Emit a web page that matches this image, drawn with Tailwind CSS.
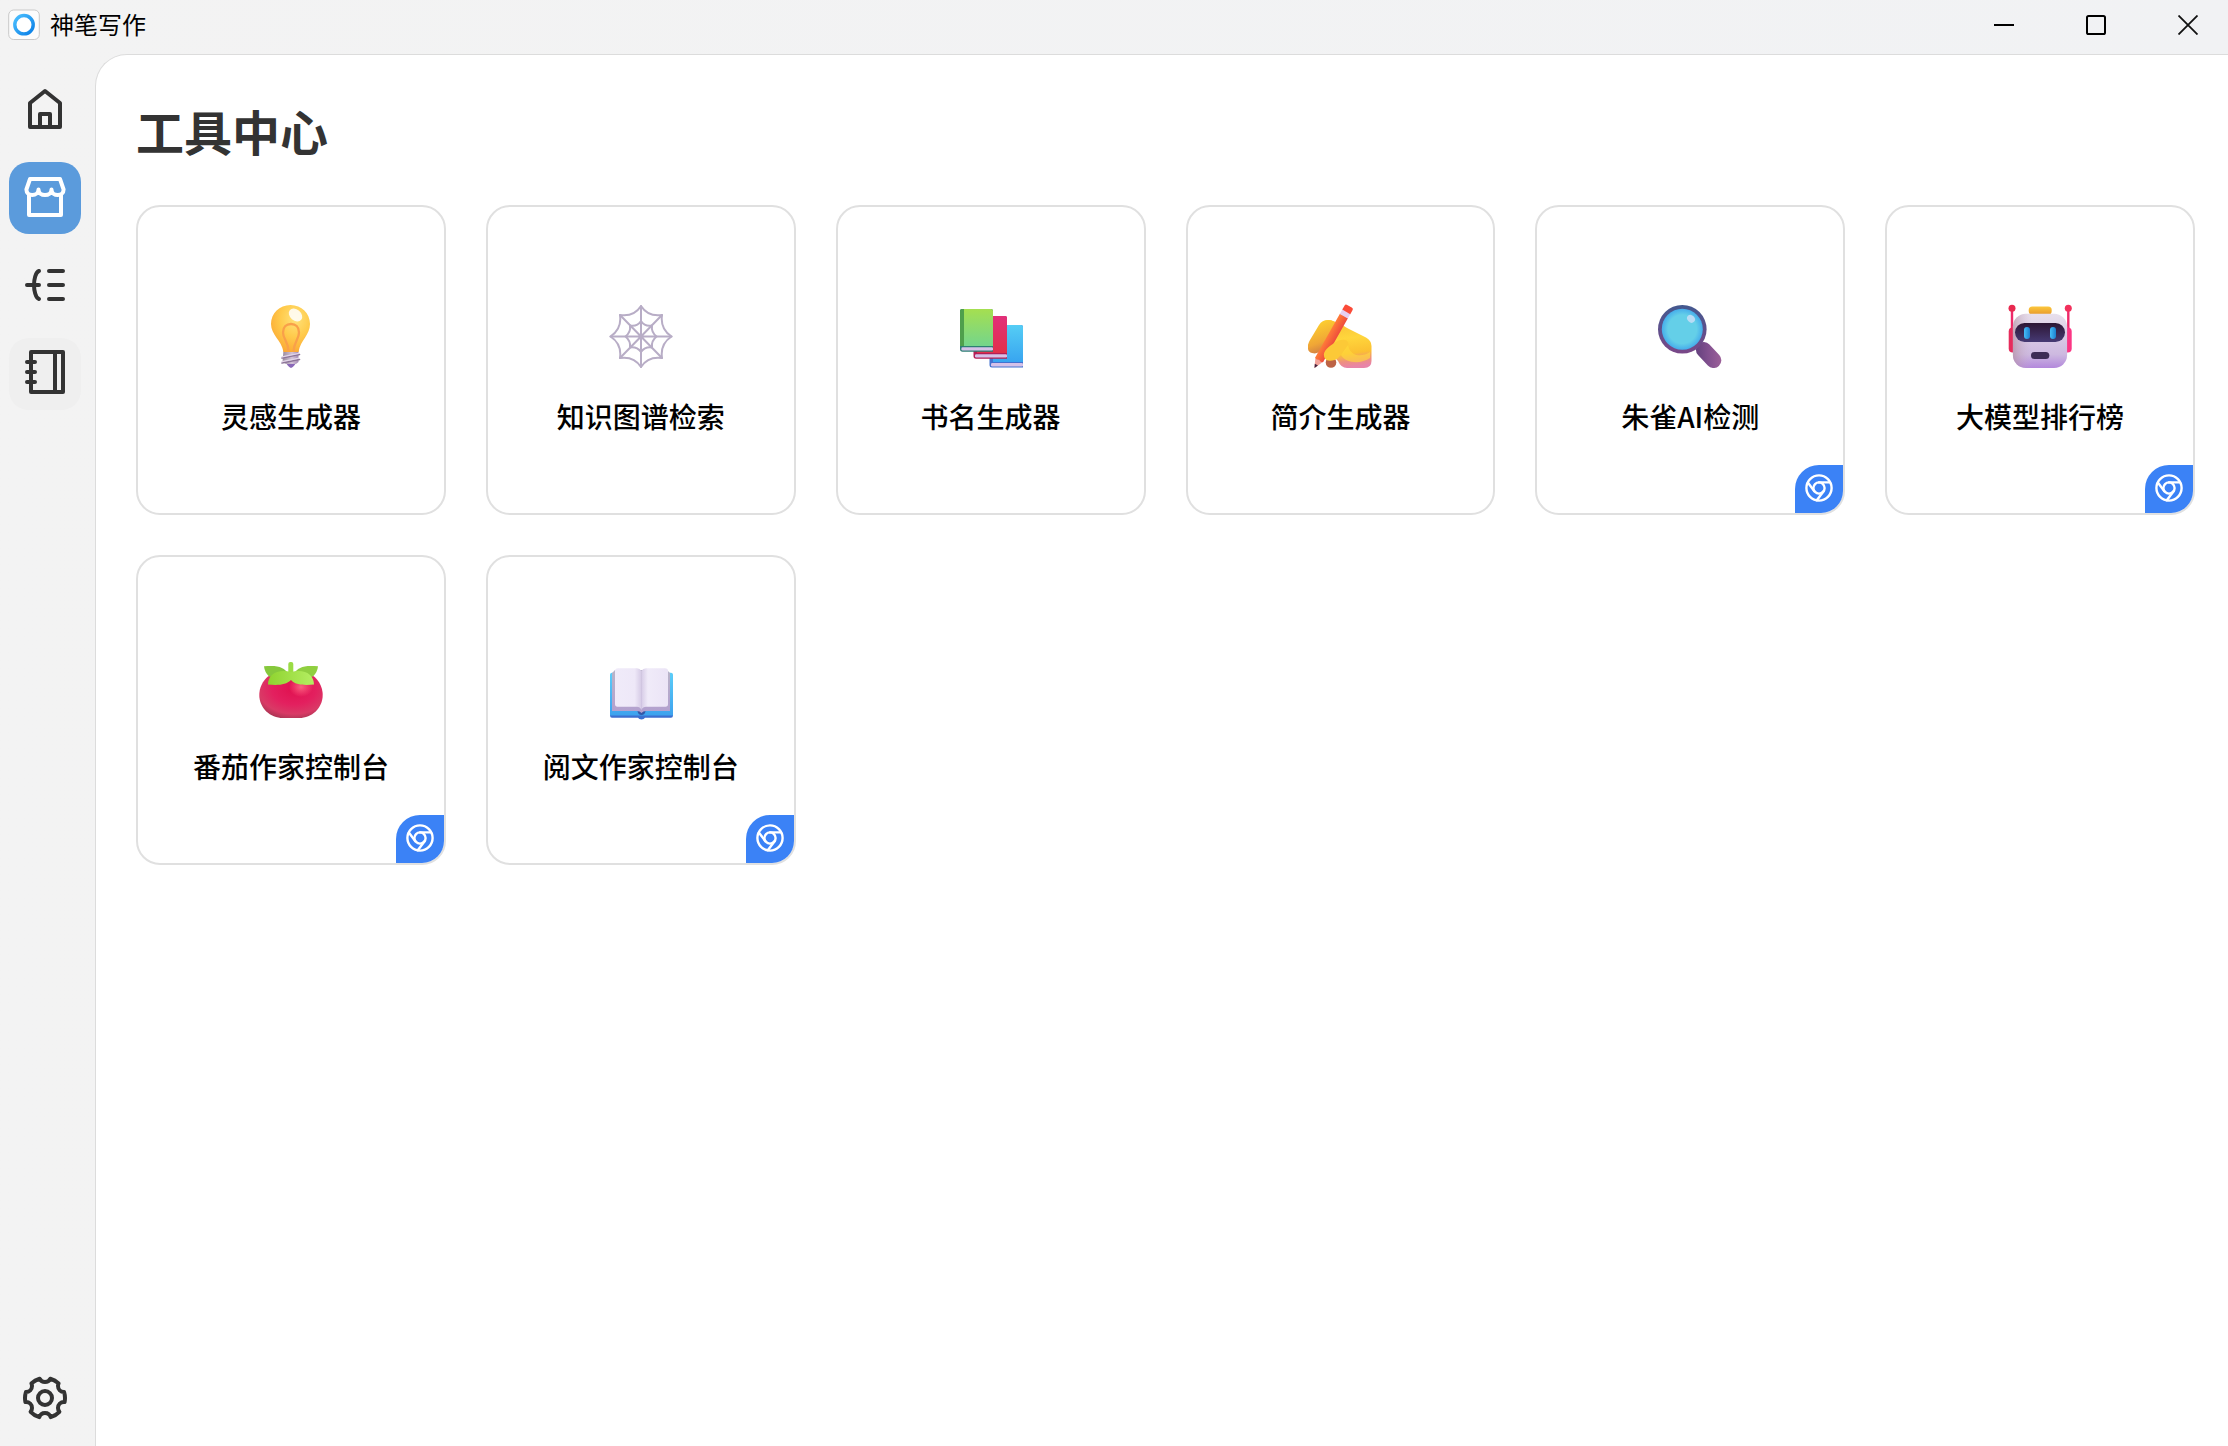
<!DOCTYPE html>
<html lang="zh-CN">
<head>
<meta charset="utf-8">
<meta name="viewport" content="width=device-width, initial-scale=1">
<title>神笔写作</title>
<script src="https://cdn.jsdelivr.net/npm/@tailwindcss/browser@4"></script>
</head>
<body class="flex min-h-screen flex-col bg-linear-to-r from-[#f3f3f3] to-[#f1f2f4] font-['Noto_Sans_CJK_SC',sans-serif] text-black">

<svg class="hidden" aria-hidden="true">
  <symbol id="chrome" viewBox="0 0 28 28">
    <g fill="none" stroke="#fff" stroke-width="2.4" stroke-linecap="round" stroke-linejoin="round">
      <circle cx="14" cy="14" r="12.6"/>
      <circle cx="14" cy="14" r="5.6"/>
      <path d="M14 8.4H25M9.2 16.9L3 8.8M18.6 17.2L11.8 26.2"/>
    </g>
  </symbol>
</svg>

<header class="flex h-[54px] shrink-0 items-center justify-between pb-1 pl-2">
  <div class="flex items-center gap-2.5">
    <svg class="h-8 w-8" viewBox="0 0 32 32" aria-hidden="true">
      <defs><linearGradient id="ring" x1="0" y1="0" x2="1" y2="1"><stop offset="0" stop-color="#4cc0ff"/><stop offset="1" stop-color="#0a7fe6"/></linearGradient></defs>
      <rect x="0.7" y="1" width="30.6" height="29.5" rx="5" fill="#fcfcfc" stroke="#c9c9c9"/>
      <circle cx="16" cy="15.7" r="9.2" fill="#fff" stroke="url(#ring)" stroke-width="3.4"/>
    </svg>
    <span class="pb-0.5 text-2xl leading-8">神笔写作</span>
  </div>
  <div class="flex gap-3">
    <button type="button" aria-label="最小化" class="flex h-12 w-20 items-center justify-center"><svg class="h-5 w-5" viewBox="0 0 20 20"><path d="M0 10H20" stroke="#000" stroke-width="2"/></svg></button>
    <button type="button" aria-label="最大化" class="flex h-12 w-20 items-center justify-center"><svg class="h-5 w-5" viewBox="0 0 20 20"><rect x="1" y="1" width="18" height="18" rx="1.6" fill="none" stroke="#000" stroke-width="2"/></svg></button>
    <button type="button" aria-label="关闭" class="flex h-12 w-20 items-center justify-center"><svg class="h-5 w-5" viewBox="0 0 20 20"><path d="M0.5 0.5L19.5 19.5M19.5 0.5L0.5 19.5" stroke="#111" stroke-width="1.8"/></svg></button>
  </div>
</header>

<div class="flex flex-1">
  <nav class="flex w-[95px] shrink-0 flex-col justify-between pt-5 pb-3 pl-[9px]">
    <div class="flex flex-col gap-4">
      <a href="#" aria-label="首页" class="flex h-18 w-18 items-center justify-center rounded-[20px] pb-0.5">
        <svg class="h-12 w-12" viewBox="0 0 48 48" fill="none" stroke="#333" stroke-width="4" stroke-linejoin="round"><path d="M9 18V42H39V18L24 6L9 18Z"/><path d="M19 29V42H29V29H19Z"/></svg>
      </a>
      <a href="#" aria-label="工具中心" aria-current="page" class="flex h-18 w-18 items-center justify-center rounded-[20px] bg-[#5b9bdc] pb-0.5">
        <svg class="h-12 w-12" viewBox="0 0 48 48" fill="none" stroke="#fff" stroke-width="4" stroke-linejoin="round" stroke-linecap="round"><path d="M8 22V42H40V22"/><path d="M5.4 16.5L9 6H39L42.6 16.5C42.6 20 40 22 36.8 22S30.5 20 30.5 16.5C30.5 20 27.5 22 24 22S17.5 20 17.5 16.5C17.5 20 14.5 22 11.2 22S5.4 20 5.4 16.5Z"/></svg>
      </a>
      <a href="#" aria-label="大纲" class="flex h-18 w-18 items-center justify-center rounded-[20px] pb-0.5">
        <svg class="h-12 w-12" viewBox="0 0 48 48" fill="none" stroke="#333" stroke-width="4" stroke-linejoin="round" stroke-linecap="round"><path d="M28 10H42M28 24H42M28 38H42M6 24H18M18 10C14.5 11 13 19 13 24S14.5 37 18 38"/></svg>
      </a>
      <a href="#" aria-label="笔记本" class="flex h-18 w-18 items-center justify-center rounded-[20px] bg-[#efefef] pb-0.5">
        <svg class="h-12 w-12" viewBox="0 0 48 48" fill="none" stroke="#333" stroke-width="4" stroke-linejoin="round" stroke-linecap="round"><path d="M10 3H42V43H10ZM34 3V43M6 13H14M6 23H14M6 33H14"/></svg>
      </a>
    </div>
    <a href="#" aria-label="设置" class="flex h-18 w-18 items-center justify-center rounded-[20px]">
      <svg class="h-12 w-12" viewBox="0 0 48 48" fill="none" stroke="#333" stroke-width="4" stroke-linejoin="round"><path d="M18.284 43.171C14.933 42.174 11.95 40.321 9.588 37.867C10.469 36.823 11 35.473 11 34C11 30.686 8.314 28 5 28C4.8 28 4.601 28.01 4.406 28.029C4.14 26.728 4 25.38 4 24C4 21.91 4.321 19.894 4.916 18H5C8.314 18 11 15.314 11 12C11 11.049 10.779 10.149 10.385 9.35C12.698 7.2 15.521 5.59 18.652 4.723C19.644 6.668 21.667 8 24 8C26.333 8 28.356 6.668 29.348 4.723C32.48 5.59 35.303 7.2 37.615 9.35C37.221 10.149 37 11.049 37 12C37 15.314 39.686 18 43 18H43.084C43.679 19.894 44 21.91 44 24C44 25.38 43.86 26.728 43.594 28.029C43.399 28.01 43.201 28 43 28C39.686 28 37 30.686 37 34C37 35.473 37.531 36.823 38.412 37.867C36.05 40.321 33.067 42.174 29.716 43.171C28.943 40.752 26.676 39 24 39C21.324 39 19.057 40.752 18.284 43.171Z"/><circle cx="24" cy="24" r="7"/></svg>
    </a>
  </nav>

  <main class="min-w-0 flex-1 rounded-tl-[32px] border-t border-l border-[#dcdcdc] bg-white pt-[51px] pr-[33px] pb-10 pl-10">
    <h1 class="mb-[51px] text-5xl leading-12 font-bold text-[#333]">工具中心</h1>
    <div class="grid grid-cols-6 gap-10">

      <button type="button" class="relative flex aspect-square flex-col items-center justify-center gap-7 rounded-3xl border-2 border-[#e0e0e0] bg-white pt-5">
        <svg class="h-16 w-16" viewBox="0 0 64 64" aria-hidden="true">
          <defs>
            <radialGradient id="bulb" cx=".62" cy=".3" r=".75"><stop offset="0" stop-color="#ffe27a"/><stop offset=".5" stop-color="#ffcb4c"/><stop offset="1" stop-color="#fba733"/></radialGradient>
            <linearGradient id="screw" x1="0" x2="1"><stop offset="0" stop-color="#9a8a9c"/><stop offset=".6" stop-color="#d3c3d8"/><stop offset="1" stop-color="#a48ab4"/></linearGradient>
          </defs>
          <path d="M27 58H37Q36 62 32 64Q28 62 27 58Z" fill="#8a68b8"/>
          <path d="M24.5 46H39.5V58L37 60H27L23.5 58Z" fill="url(#screw)"/>
          <path d="M23 54L40.5 50.5M23 59L40.5 55.5" stroke="#8d7599" stroke-width="1.6" stroke-linecap="round"/>
          <path d="M23 52.8L40 49.3M23 57.6L40 54.1" stroke="#e2d5e8" stroke-width="1.2" stroke-linecap="round"/>
          <path d="M31.5 1C42.5 1 51 9.5 51 20C51 31 41.5 36 39.5 48H24.5C22.5 36 12 31 12 20C12 9.5 20.5 1 31.5 1Z" fill="url(#bulb)"/>
          <path d="M29.5 47.5C29.5 38 24 35 24 28.5C24 23 27.5 20 32 20S40 23 40 28.5C40 35 35 38 34.5 47.5" fill="none" stroke="#f9a04a" stroke-width="2.3"/>
          <ellipse cx="36.5" cy="11" rx="7.5" ry="5.5" transform="rotate(40 36.5 11)" fill="#fff" opacity=".85"/>
        </svg>
        <span class="text-[28px] leading-10 font-medium">灵感生成器</span>
      </button>

      <button type="button" class="relative flex aspect-square flex-col items-center justify-center gap-7 rounded-3xl border-2 border-[#e0e0e0] bg-white pt-5">
        <svg class="h-16 w-16" viewBox="0 0 64 64" aria-hidden="true" fill="none" stroke="#b8adc6" stroke-width="2" stroke-linejoin="round" stroke-linecap="round">
          <path d="M32 2V63M1.5 32.5H62.5M11 11L53 54M53 11L11 54"/>
          <path d="M32 2Q39 13 53 11Q51 25 62.5 32.5Q51 40 53 54Q39 52 32 63Q25 52 11 54Q13 40 1.5 32.5Q13 25 11 11Q25 13 32 2Z"/>
          <path d="M32 17Q36 23 43 21.5Q42 28 47.5 32.5Q42 37 43 43.5Q36 42.5 32 48Q28 42.5 21 43.5Q22 37 16.5 32.5Q22 28 21 21.5Q28 23 32 17Z"/>
        </svg>
        <span class="text-[28px] leading-10 font-medium">知识图谱检索</span>
      </button>

      <button type="button" class="relative flex aspect-square flex-col items-center justify-center gap-7 rounded-3xl border-2 border-[#e0e0e0] bg-white pt-5">
        <svg class="h-16 w-16" viewBox="0 0 64 64" aria-hidden="true">
          <defs>
            <linearGradient id="bg1" x2="0" y2="1"><stop offset="0" stop-color="#a5df50"/><stop offset="1" stop-color="#74d58c"/></linearGradient>
            <linearGradient id="bg2" x2="0" y2="1"><stop offset="0" stop-color="#e2307a"/><stop offset="1" stop-color="#e0304a"/></linearGradient>
            <linearGradient id="bg3" x2="0" y2="1"><stop offset="0" stop-color="#55cdf5"/><stop offset="1" stop-color="#38a5f0"/></linearGradient>
          </defs>
          <path d="M30.5 23Q30.5 21 32.5 21H62Q64 21 64 23V63.5H33Q30.5 63.5 30.5 61Z" fill="#4372d0"/>
          <path d="M34 21H62Q64 21 64 23V58H34Z" fill="url(#bg3)"/>
          <rect x="32" y="59" width="32" height="3.4" rx="1.2" fill="#d5c1e8"/>
          <path d="M14.5 14Q14.5 12 16.5 12H46Q48 12 48 14V54.7H17Q14.5 54.7 14.5 52Z" fill="#b31f55"/>
          <path d="M18 12H46Q48 12 48 14V49H18Z" fill="url(#bg2)"/>
          <rect x="16" y="50.3" width="32" height="3.2" rx="1.2" fill="#d5c1e8"/>
          <path d="M1 7Q1 5 3 5H32Q34 5 34 7V47.7H3.5Q1 47.7 1 45Z" fill="#2d7f74"/>
          <path d="M1 7Q1 5 3 5H5V42H1Z" fill="#4f9f4c"/>
          <path d="M5 5H32Q34 5 34 7V42H5Z" fill="url(#bg1)"/>
          <rect x="2.4" y="43.3" width="31.6" height="3.2" rx="1.2" fill="#d5c1e8"/>
        </svg>
        <span class="text-[28px] leading-10 font-medium">书名生成器</span>
      </button>

      <button type="button" class="relative flex aspect-square flex-col items-center justify-center gap-7 rounded-3xl border-2 border-[#e0e0e0] bg-white pt-5">
        <svg class="h-16 w-16" viewBox="0 0 64 64" aria-hidden="true">
          <defs>
            <linearGradient id="palm" x1=".3" y1="0" x2=".45" y2="1"><stop offset="0" stop-color="#f8bf35"/><stop offset=".4" stop-color="#ffd63c"/><stop offset=".72" stop-color="#fbc032"/><stop offset=".88" stop-color="#ee8f80"/><stop offset="1" stop-color="#e884a8"/></linearGradient>
            <linearGradient id="finger" x1=".5" y1="0" x2=".8" y2="1"><stop offset="0" stop-color="#fdd02f"/><stop offset=".6" stop-color="#f0a636"/><stop offset="1" stop-color="#c5704a"/></linearGradient>
            <linearGradient id="pencil" x1="0" y1="0" x2="1" y2="0"><stop offset="0" stop-color="#ff7c38"/><stop offset="1" stop-color="#ee4c3c"/></linearGradient>
          </defs>
          <circle cx="23" cy="58.5" r="5.3" fill="#bd6345"/>
          <path d="M17 17C24 14 34 21 41 25L58 33.5Q63.5 36.5 63.5 42V57Q63.5 64 56 64H39Q33 64 30 57L20 46L12 34Z" fill="url(#palm)"/>
          <path d="M0 45Q-1 41 2 36L11 21Q14 16 20 16Q27 16 27 21L12 47Q9 50.5 4 49Q0.5 48 0 45Z" fill="url(#finger)"/>
          <g transform="translate(6.5 64) rotate(29.5)">
            <path d="M0 0L-4.6 -10H4.6Z" fill="#f2a299"/>
            <path d="M0 0L-1.8 -3.8H1.8Z" fill="#43213c"/>
            <path d="M-4.6 -9.5V-60H4.6V-9.5Q2.5 -7.5 0 -9.5Q-2.5 -7.5 -4.6 -9.5Z" fill="url(#pencil)"/>
            <rect x="-4.6" y="-65" width="9.2" height="5.5" fill="#e7cff0"/>
            <path d="M-4.6 -64.5V-69Q-4.6 -71 -2.6 -71H2.6Q4.6 -71 4.6 -69V-64.5Z" fill="#fb4b38"/>
          </g>
          <path d="M16 52C15 47 20 43 28 38C34 34 42 35 40 42C39 47 33 50 30 54C26 57.5 17 58.5 16 52Z" fill="#fcc937"/>
          <path d="M40 41C42 52 53 54 62 48V54C54 60 38 60 33 51Z" fill="#ffd93c" opacity=".65"/>
        </svg>
        <span class="text-[28px] leading-10 font-medium">简介生成器</span>
      </button>

      <button type="button" class="relative flex aspect-square flex-col items-center justify-center gap-7 rounded-3xl border-2 border-[#e0e0e0] bg-white pt-5">
        <svg class="h-16 w-16" viewBox="0 0 64 64" aria-hidden="true">
          <defs>
            <linearGradient id="rim" x2="0" y2="1"><stop offset="0" stop-color="#43598f"/><stop offset="1" stop-color="#7a4788"/></linearGradient>
            <radialGradient id="lens"><stop offset=".7" stop-color="#64cfe8"/><stop offset="1" stop-color="#46adeb"/></radialGradient>
            <linearGradient id="grip" x1=".2" y1="0" x2=".8" y2="1"><stop offset="0" stop-color="#62407c"/><stop offset=".5" stop-color="#82508f"/><stop offset="1" stop-color="#9d6199"/></linearGradient>
          </defs>
          <rect x="-7.8" y="-14.5" width="15.6" height="30" rx="7.8" transform="translate(50.3 50.6) rotate(-43)" fill="url(#grip)"/>
          <circle cx="24.3" cy="25.2" r="24.3" fill="url(#rim)"/>
          <circle cx="24.3" cy="25.2" r="20.5" fill="url(#lens)"/>
          <ellipse cx="33" cy="14.8" rx="4.3" ry="3.5" transform="rotate(45 33 14.8)" fill="#b9dcf5"/>
        </svg>
        <span class="text-[28px] leading-10 font-medium">朱雀AI检测</span>
        <span class="absolute right-0 bottom-0 flex h-12 w-12 items-center justify-center rounded-tl-3xl rounded-br-[22px] bg-[#3b82f6] pb-0.5"><svg class="h-7 w-7" aria-hidden="true"><use href="#chrome"/></svg></span>
      </button>

      <button type="button" class="relative flex aspect-square flex-col items-center justify-center gap-7 rounded-3xl border-2 border-[#e0e0e0] bg-white pt-5">
        <svg class="h-16 w-16" viewBox="0 0 64 64" aria-hidden="true">
          <defs>
            <linearGradient id="head" x2="0" y2="1"><stop offset="0" stop-color="#e8e0ec"/><stop offset=".75" stop-color="#cdb9e0"/><stop offset="1" stop-color="#b388dc"/></linearGradient>
            <linearGradient id="shade" x2="1"><stop offset="0" stop-color="#b08a98" stop-opacity=".6"/><stop offset=".35" stop-color="#cdb9d5" stop-opacity="0"/></linearGradient>
            <linearGradient id="visor" x2="0" y2="1"><stop offset="0" stop-color="#2d1634"/><stop offset="1" stop-color="#463a74"/></linearGradient>
            <linearGradient id="hat" x2="0" y2="1"><stop offset="0" stop-color="#fcc73c"/><stop offset="1" stop-color="#e89a2c"/></linearGradient>
            <linearGradient id="eye" x2="1"><stop offset="0" stop-color="#46bdf8"/><stop offset="1" stop-color="#1b7fd0"/></linearGradient>
          </defs>
          <path d="M4 4V26M60.3 4V26" stroke="#ee2a6a" stroke-width="2.4"/>
          <circle cx="4" cy="4.3" r="3.5" fill="#e8294f"/><circle cx="60.3" cy="4.3" r="3.5" fill="#f2305c"/>
          <rect x=".7" y="23.5" width="9" height="25" rx="4" fill="#e62c5c"/>
          <rect x="54.5" y="23.5" width="9.2" height="25" rx="4" fill="#fb3684"/>
          <rect x="20.7" y="2.5" width="23" height="8" rx="3.6" fill="url(#hat)"/>
          <rect x="4.9" y="9.7" width="54.2" height="54.3" rx="13" fill="url(#head)"/>
          <rect x="4.9" y="9.7" width="54.2" height="54.3" rx="13" fill="url(#shade)"/>
          <rect x="7" y="19" width="50" height="19" rx="9.5" fill="url(#visor)"/>
          <rect x="16" y="23" width="6" height="12" rx="3" fill="url(#eye)"/>
          <rect x="42" y="23" width="6" height="12" rx="3" fill="url(#eye)"/>
          <rect x="23" y="48" width="18.3" height="7" rx="3.5" fill="#3d2c55"/>
        </svg>
        <span class="text-[28px] leading-10 font-medium">大模型排行榜</span>
        <span class="absolute right-0 bottom-0 flex h-12 w-12 items-center justify-center rounded-tl-3xl rounded-br-[22px] bg-[#3b82f6] pb-0.5"><svg class="h-7 w-7" aria-hidden="true"><use href="#chrome"/></svg></span>
      </button>

      <button type="button" class="relative flex aspect-square flex-col items-center justify-center gap-7 rounded-3xl border-2 border-[#e0e0e0] bg-white pt-5">
        <svg class="h-16 w-16" viewBox="0 0 64 64" aria-hidden="true">
          <defs>
            <radialGradient id="tom" cx=".55" cy=".35" r=".7"><stop offset="0" stop-color="#e0104f"/><stop offset=".5" stop-color="#e3205f"/><stop offset=".8" stop-color="#d93a66"/><stop offset="1" stop-color="#a83452"/></radialGradient>
            <radialGradient id="shine"><stop offset="0" stop-color="#f8617f"/><stop offset="1" stop-color="#ff5a80" stop-opacity="0"/></radialGradient>
            <linearGradient id="leaf" x2="1"><stop offset="0" stop-color="#8fd32f"/><stop offset="1" stop-color="#b4ee62"/></linearGradient>
          </defs>
          <path d="M18 19H46C57 20 63.7 31 63.7 41C63.7 54 53 64 40 64H24C11 64 .3 54 .3 41C.3 31 7 20 18 19Z" fill="url(#tom)"/>
          <ellipse cx="42" cy="33" rx="12" ry="10" fill="url(#shine)"/>
          <rect x="29.3" y="8" width="5" height="14" rx="2" fill="#9bdc45"/>
          <path d="M5 12.3C19 11 25 13 29.5 20L22 24L10 22.5Q5.5 18 5 12.3Z" fill="#86c83c"/>
          <path d="M59 12.3C45 11 39 13 34.5 20L42 24L54 22.5Q58.5 18 59 12.3Z" fill="#90cf40"/>
          <path d="M9 30.5C9 20 19 14.5 32 18C45 14.5 55 20 55 30.5C45 31.5 36 31 32 26C27 31 19 31.5 9 30.5Z" fill="url(#leaf)"/>
        </svg>
        <span class="text-[28px] leading-10 font-medium">番茄作家控制台</span>
        <span class="absolute right-0 bottom-0 flex h-12 w-12 items-center justify-center rounded-tl-3xl rounded-br-[22px] bg-[#3b82f6] pb-0.5"><svg class="h-7 w-7" aria-hidden="true"><use href="#chrome"/></svg></span>
      </button>

      <button type="button" class="relative flex aspect-square flex-col items-center justify-center gap-7 rounded-3xl border-2 border-[#e0e0e0] bg-white pt-5">
        <svg class="h-16 w-16 overflow-visible" viewBox="0 0 64 64" aria-hidden="true">
          <defs>
            <linearGradient id="cover" x2="0" y2="1"><stop offset="0" stop-color="#5ccdf8"/><stop offset="1" stop-color="#3da2ee"/></linearGradient>
            <linearGradient id="pl" x2="1"><stop offset="0" stop-color="#f0ebf9"/><stop offset=".75" stop-color="#eee8f8"/><stop offset="1" stop-color="#d6cbe6"/></linearGradient>
            <linearGradient id="pr" x2="1"><stop offset="0" stop-color="#d6cbe6"/><stop offset=".25" stop-color="#f0ebf9"/><stop offset="1" stop-color="#ebe4f6"/></linearGradient>
            <linearGradient id="pe" x2="0" y2="1"><stop offset="0" stop-color="#b9b4c8"/><stop offset="1" stop-color="#b3a0cf"/></linearGradient>
          </defs>
          <path d="M1 22Q1 20 3 20H62Q64 20 64 22V61.5Q64 63.7 62 63.7H36Q35 65.5 32.5 65.5T29 63.7H3Q1 63.7 1 61.5Z" fill="#3c6fd0"/>
          <path d="M1 21Q1 18.7 3 18.7H62Q64 18.7 64 21V61.5H1Z" fill="url(#cover)"/>
          <path d="M28.5 57H36.5Q36 61 32.5 61T28.5 57Z" fill="#3457a8"/>
          <path d="M6 16L3 19V57H28Q31 57 32.500 59Q34 57 37 57H61V19L58 16Z" fill="url(#pe)"/>
          <path d="M6 17Q6 14.3 9 14.3H28Q31 14.3 32.3 17V56Q31 52.8 28 52.8H8.5Q6 52.8 6 50Z" fill="url(#pl)"/>
          <path d="M59 17Q59 14.3 56 14.3H37Q34 14.3 32.3 17V56Q34 52.8 37 52.8H56.5Q59 52.8 59 50Z" fill="url(#pr)"/>
        </svg>
        <span class="text-[28px] leading-10 font-medium">阅文作家控制台</span>
        <span class="absolute right-0 bottom-0 flex h-12 w-12 items-center justify-center rounded-tl-3xl rounded-br-[22px] bg-[#3b82f6] pb-0.5"><svg class="h-7 w-7" aria-hidden="true"><use href="#chrome"/></svg></span>
      </button>

    </div>
  </main>
</div>
</body>
</html>
